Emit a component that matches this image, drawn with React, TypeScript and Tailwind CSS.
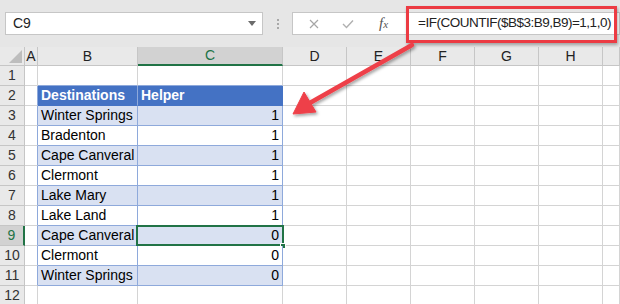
const cols = ["A", "B", "C", "D", "E", "F", "G", "H", ""];
const colW = ["w-[13px]", "w-[100px]", "w-[145px]", "w-[64px]", "w-[64px]", "w-[64px]", "w-[64px]", "w-[64px]", "w-[17px]"];

const rows: { name: string; value: number | null }[] = [
  { name: "Winter Springs", value: 1 },
  { name: "Bradenton", value: 1 },
  { name: "Cape Canveral", value: 1 },
  { name: "Clermont", value: 1 },
  { name: "Lake Mary", value: 1 },
  { name: "Lake Land", value: 1 },
  { name: "Cape Canveral", value: 0 },
  { name: "Clermont", value: 0 },
  { name: "Winter Springs", value: 0 },
];

function EmptyCells({ from }: { from: number }) {
  return (
    <>
      {colW.slice(from).map((w, i) => (
        <div key={i} className={`${w} h-full shrink-0 border-r border-b border-[#d4d4d4]`} />
      ))}
    </>
  );
}

function RowHead({ n, active }: { n: number; active?: boolean }) {
  return (
    <div
      className={
        active
          ? "w-[25px] h-full shrink-0 flex items-center justify-center bg-[#d2d2d2] text-[#217346] border-r-2 border-r-[#217346] border-b border-b-[#c6c6c6] text-[14px]"
          : "w-[25px] h-full shrink-0 flex items-center justify-center bg-[#e9e9e9] text-[#333] border-r border-b border-[#c6c6c6] text-[14px]"
      }
    >
      {n}
    </div>
  );
}

export default function App() {
  return (
    <div className="relative w-[620px] h-[304px] overflow-hidden bg-white font-['Liberation_Sans',Arial,sans-serif]">
      {/* formula bar */}
      <div className="h-[47px] bg-[#e6e6e6] flex items-start pt-[12px]">
        <div className="ml-[5px] w-[258px] h-[23px] bg-white border border-[#c6c6c6] flex items-center justify-between pl-[7px] pr-[6px]">
          <span className="text-[14px] text-[#222]">C9</span>
          <svg width="8" height="5" viewBox="0 0 8 5">
            <path d="M0 0 L8 0 L4 5 Z" fill="#6b6b6b" />
          </svg>
        </div>
        <div className="ml-[14px] mt-[7px] flex flex-col gap-[2px]">
          <span className="w-[2px] h-[2px] bg-[#a8a8a8]" />
          <span className="w-[2px] h-[2px] bg-[#a8a8a8]" />
          <span className="w-[2px] h-[2px] bg-[#a8a8a8]" />
        </div>
        <div className="ml-[13px] flex-1 h-[23px] bg-white border border-[#c6c6c6] flex items-center">
          <svg width="10" height="10" viewBox="0 0 10 10" className="ml-[16px]">
            <path d="M1 1 L9 9 M9 1 L1 9" stroke="#a6a6a6" strokeWidth="1.2" />
          </svg>
          <svg width="12" height="10" viewBox="0 0 12 10" className="ml-[23px]">
            <path d="M1 5 L4.5 8.5 L11 1.5" stroke="#b0b0b0" strokeWidth="1.4" fill="none" />
          </svg>
          <span className="ml-[25px] font-['Liberation_Serif',serif] italic text-[15px] text-[#555]">
            f<span className="text-[11px]">x</span>
          </span>
          <span className="ml-[30px] text-[13.5px] tracking-[-0.5px] text-[#222]">=IF(COUNTIF($B$3:B9,B9)=1,1,0)</span>
        </div>
      </div>

      {/* column headings */}
      <div className="flex h-[19px]">
        <div className="w-[25px] h-full shrink-0 bg-[#e9e9e9] border-r border-b border-[#c6c6c6] flex items-end justify-end p-[2px]">
          <svg width="13" height="13" viewBox="0 0 13 13">
            <path d="M13 0 L13 13 L0 13 Z" fill="#bdbdbd" />
          </svg>
        </div>
        {cols.map((c, i) =>
          c === "C" ? (
            <div
              key={c}
              className={`${colW[i]} h-full shrink-0 flex items-center justify-center bg-[#d2d2d2] text-[#217346] text-[14px] border-r border-r-[#c6c6c6] border-b-2 border-b-[#217346]`}
            >
              {c}
            </div>
          ) : (
            <div
              key={i}
              className={`${colW[i]} h-full shrink-0 flex items-center justify-center bg-[#e9e9e9] text-[#222] text-[14px] border-r border-b border-[#c6c6c6]`}
            >
              {c}
            </div>
          )
        )}
      </div>

      {/* row 1 */}
      <div className="flex h-[20px]">
        <RowHead n={1} />
        <div className="w-[13px] h-full shrink-0 border-r border-b border-[#d4d4d4]" />
        <div className="w-[100px] h-full shrink-0 border-r border-b border-r-[#d4d4d4] border-b-[#8ea9db]" />
        <div className="w-[145px] h-full shrink-0 border-r border-b border-r-[#d4d4d4] border-b-[#8ea9db]" />
        <EmptyCells from={3} />
      </div>

      {/* table header */}
      <div className="flex h-[20px]">
        <RowHead n={2} />
        <div className="w-[13px] h-full shrink-0 border-r border-b border-r-[#8ea9db] border-b-[#d4d4d4]" />
        <div className="w-[100px] h-full shrink-0 bg-[#4472c4] border-r border-b border-r-[#8ea9db] border-b-[#4472c4] flex items-center pl-[3px] text-white font-bold text-[14px]">
          Destinations
        </div>
        <div className="w-[145px] h-full shrink-0 bg-[#4472c4] border-r border-b border-[#4472c4] flex items-center pl-[3px] text-white font-bold text-[14px]">
          Helper
        </div>
        <EmptyCells from={3} />
      </div>

      {rows.map((r, i) => {
        const band = i % 2 === 0 ? "bg-[#d9e1f2]" : "bg-white";
        const selected = i === 6;
        return (
          <div key={i} className="flex h-[20px]">
            <RowHead n={i + 3} active={selected} />
            <div className="w-[13px] h-full shrink-0 border-r border-b border-r-[#8ea9db] border-b-[#d4d4d4]" />
            <div className={`w-[100px] h-full shrink-0 ${band} border-r border-b border-[#8ea9db] flex items-center pl-[3px] text-[14px] text-black`}>
              {r.name}
            </div>
            <div className={`relative w-[145px] h-full shrink-0 ${band} border-r border-b border-[#8ea9db] flex items-center justify-end pr-[3px] text-[14px] text-black`}>
              {r.value}
              {selected && (
                <>
                  <div className="absolute left-[-2px] top-[-1px] right-[-2px] bottom-[-1px] border-2 border-[#217346]" />
                  <div className="absolute right-[-4px] bottom-[-4px] w-[6px] h-[6px] bg-[#217346] border border-white" />
                </>
              )}
            </div>
            <EmptyCells from={3} />
          </div>
        );
      })}

      {/* row 12 */}
      <div className="flex h-[20px]">
        <RowHead n={12} />
        <EmptyCells from={0} />
      </div>

      {/* callout box around the formula */}
      <div className="absolute left-[406px] top-[6px] w-[211px] h-[37px] border-[3px] border-[#ec3b43] shadow-[1px_2px_3px_rgba(0,0,0,0.3)]" />

      {/* callout arrow */}
      <svg className="absolute left-0 top-0 pointer-events-none" width="620" height="304" viewBox="0 0 620 304">
        <defs>
          <filter id="drop" x="-20%" y="-20%" width="140%" height="140%">
            <feDropShadow dx="1.5" dy="2" stdDeviation="1.5" floodColor="#000" floodOpacity="0.35" />
          </filter>
        </defs>
        <g filter="url(#drop)" fill="#ee4048" stroke="#ee4048">
          <line x1="412" y1="45" x2="308" y2="104" strokeWidth="4.5" strokeLinecap="round" />
          <path d="M293 114 L304 92 L316 112 Z" strokeWidth="1" strokeLinejoin="round" />
        </g>
      </svg>
    </div>
  );
}
